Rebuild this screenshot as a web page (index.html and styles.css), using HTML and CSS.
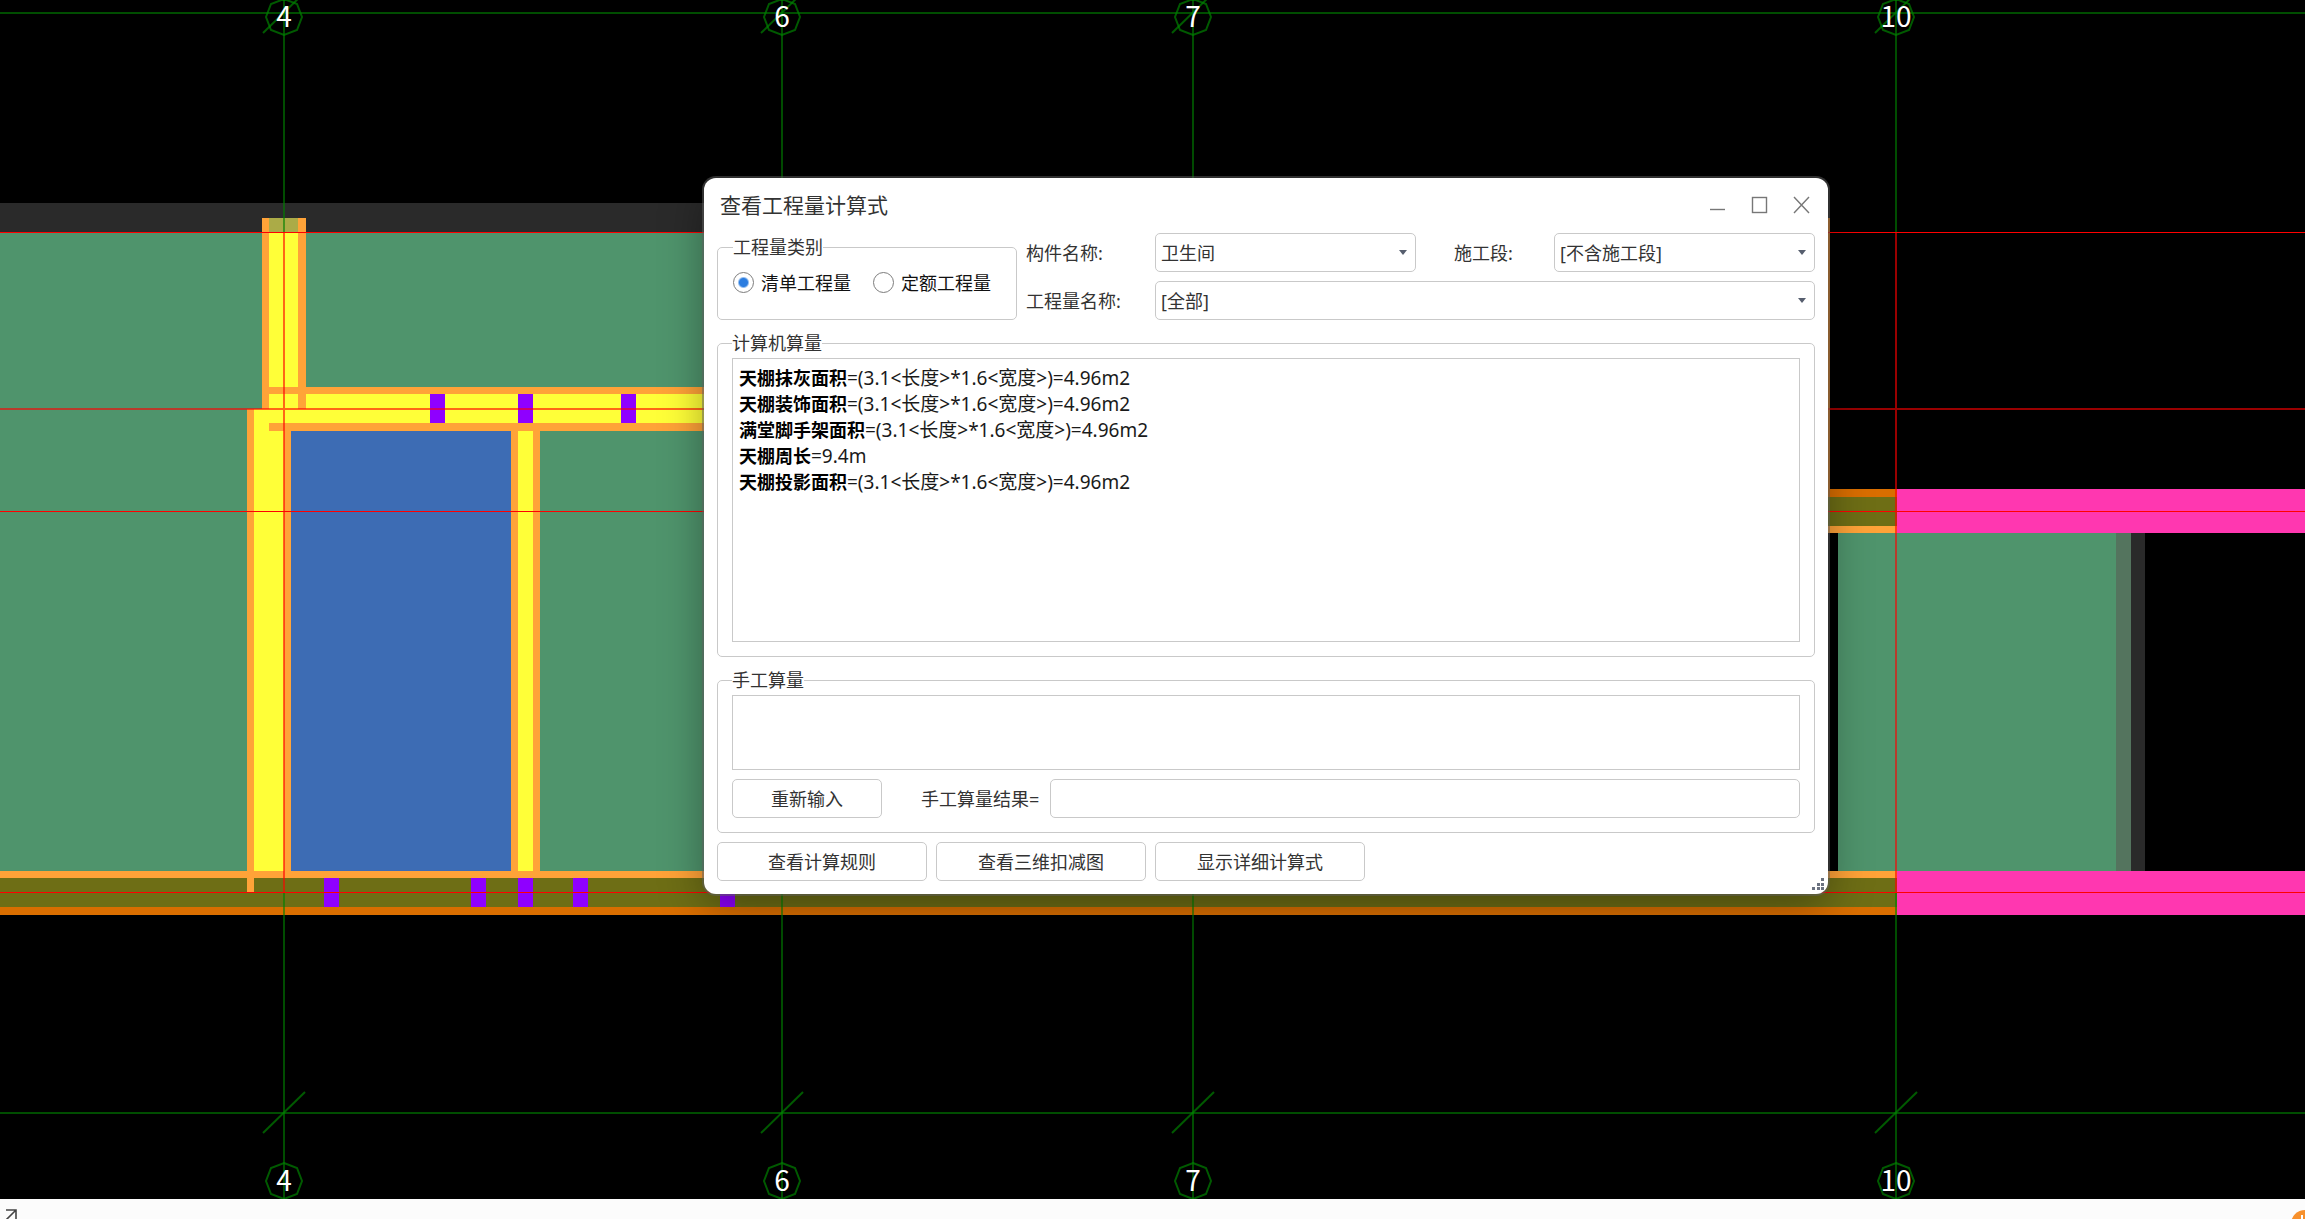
FILE: index.html
```html
<!DOCTYPE html>
<html lang="zh-CN">
<head>
<meta charset="utf-8">
<title>查看工程量计算式</title>
<link rel="stylesheet" href="styles.css">
</head>
<body>
<main class="workspace">
  <svg class="plan" viewBox="0 0 2305 1199" preserveAspectRatio="xMinYMin slice" aria-label="平面图">
    <!-- slab outline and rooms -->
    <rect class="outline" x="0" y="203" width="1100" height="30"/>
    <rect class="room" x="0" y="233" width="1100" height="638"/>
    <rect class="room" x="1838" y="533" width="278" height="338"/>
    <rect class="room-edge" x="2116" y="533" width="15" height="338"/>
    <rect class="outline" x="2131" y="533" width="14" height="338"/>
    <!-- upper wall on axis 4 -->
    <rect class="wall" x="262" y="218" width="44" height="191"/>
    <rect class="core" x="269" y="218" width="29" height="191"/>
    <rect class="core-cap" x="269" y="218" width="29" height="14"/>
    <!-- horizontal wall -->
    <rect class="core" x="306" y="387" width="800" height="44"/>
    <rect class="wall" x="269" y="387" width="800" height="7"/>
    <!-- lower wall on axis 4 -->
    <rect class="core" x="247" y="409" width="60" height="14"/>
    <rect class="core" x="254" y="409" width="30" height="462"/>
    <rect class="wall" x="284" y="423" width="7" height="448"/>
    <rect class="wall" x="269" y="423" width="800" height="8"/>
    <rect class="bathroom" x="291" y="431" width="220" height="440"/>
    <rect class="wall" x="511" y="431" width="29" height="440"/>
    <rect class="core" x="518" y="431" width="15" height="440"/>
    <!-- bottom beam -->
    <rect class="beam" x="0" y="878" width="1897" height="29"/>
    <rect class="wall" x="0" y="871" width="1897" height="7"/>
    <rect class="beam-edge" x="0" y="907" width="1897" height="8"/>
    <rect class="wall" x="247" y="409" width="7" height="484"/>
    <!-- beam right of the dialog -->
    <rect class="beam-edge" x="1820" y="218" width="10" height="272"/>
    <rect class="beam" x="1800" y="497" width="97" height="29"/>
    <rect class="beam-edge" x="1800" y="489" width="97" height="8"/>
    <rect class="wall" x="1800" y="526" width="97" height="7"/>
    <g class="column">
      <rect x="430" y="394" width="15" height="29"/><rect x="518" y="394" width="15" height="29"/>
      <rect x="621" y="394" width="15" height="29"/><rect x="324" y="878" width="15" height="29"/>
      <rect x="471" y="878" width="15" height="29"/><rect x="518" y="878" width="15" height="29"/>
      <rect x="573" y="878" width="15" height="29"/><rect x="720" y="878" width="15" height="29"/>
    </g>
    <rect class="strip" x="1897" y="489" width="408" height="44"/>
    <rect class="strip" x="1897" y="871" width="408" height="44"/>
    <!-- axis lines -->
    <g class="axis">
      <path d="M0 13H2305M0 1113H2305"/>
      <path d="M284 0V232M284 893V1199M782 0V1199M1193 0V1199M1896 0V232M1896 893V1199"/>
    </g>
    <g class="grid">
      <path class="grid-solid" d="M0 232.500H2305M0 511.500H2305M0 892.500H2305"/>
      <path class="grid-soft" d="M0 409H2305M284 233V892M1896 233V892"/>
    </g>
    <defs>
      <g id="mark"><path d="M0-18L13-13L18 0L13 13L0 18L-13 13L-18 0L-13-13Z"/></g>
      <path id="tick" d="M-21 20L21-21"/>
    </defs>
    <g class="marks">
      <use href="#tick" x="284" y="13"/><use href="#tick" x="782" y="13"/><use href="#tick" x="1193" y="13"/><use href="#tick" x="1896" y="13"/>
      <use href="#tick" x="284" y="1113"/><use href="#tick" x="782" y="1113"/><use href="#tick" x="1193" y="1113"/><use href="#tick" x="1896" y="1113"/>
      <use href="#mark" x="284" y="17"/><use href="#mark" x="782" y="17"/><use href="#mark" x="1193" y="17"/><use href="#mark" x="1896" y="17"/>
      <use href="#mark" x="284" y="1181"/><use href="#mark" x="782" y="1181"/><use href="#mark" x="1193" y="1181"/><use href="#mark" x="1896" y="1181"/>
    </g>
    <g class="axis-name">
      <text x="284" y="27">4</text><text x="782" y="27">6</text><text x="1193" y="27">7</text><text x="1896" y="27">10</text>
      <text x="284" y="1191">4</text><text x="782" y="1191">6</text><text x="1193" y="1191">7</text><text x="1896" y="1191">10</text>
    </g>
  </svg>

  <section class="dialog" role="dialog" aria-labelledby="dialog-title">
    <header class="titlebar">
      <h1 id="dialog-title">查看工程量计算式</h1>
      <button class="win-btn" type="button" aria-label="最小化"><svg width="18" height="18"><path d="M1 13.500H16"/></svg></button>
      <button class="win-btn" type="button" aria-label="最大化"><svg width="18" height="18"><rect x="1.500" y="1.500" width="14" height="15"/></svg></button>
      <button class="win-btn" type="button" aria-label="关闭"><svg width="18" height="18"><path d="M1 1L16 17M16 1L1 17"/></svg></button>
    </header>

    <form class="form">
      <div class="filters">
        <fieldset class="group kinds">
          <legend>工程量类别</legend>
          <div class="radios">
            <label class="radio"><input type="radio" name="kind" checked>清单工程量</label>
            <label class="radio"><input type="radio" name="kind">定额工程量</label>
          </div>
        </fieldset>
        <label for="part">构件名称:</label>
        <span class="combo"><select id="part"><option>卫生间</option></select></span>
        <label class="stage" for="stage">施工段:</label>
        <span class="combo"><select id="stage"><option>[不含施工段]</option></select></span>
        <label for="quantity">工程量名称:</label>
        <span class="combo wide"><select id="quantity"><option>[全部]</option></select></span>
      </div>

      <fieldset class="group">
        <legend>计算机算量</legend>
        <div class="results">
          <p><b>天棚抹灰面积</b><span>=(3.1&lt;长度&gt;*1.6&lt;宽度&gt;)=4.96m2</span></p>
          <p><b>天棚装饰面积</b><span>=(3.1&lt;长度&gt;*1.6&lt;宽度&gt;)=4.96m2</span></p>
          <p><b>满堂脚手架面积</b><span>=(3.1&lt;长度&gt;*1.6&lt;宽度&gt;)=4.96m2</span></p>
          <p><b>天棚周长</b><span>=9.4m</span></p>
          <p><b>天棚投影面积</b><span>=(3.1&lt;长度&gt;*1.6&lt;宽度&gt;)=4.96m2</span></p>
        </div>
      </fieldset>

      <fieldset class="group">
        <legend>手工算量</legend>
        <textarea class="manual" aria-label="手工算量"></textarea>
        <div class="manual-row">
          <button class="btn reset" type="button">重新输入</button>
          <label for="manual-result">手工算量结果=</label>
          <input class="field" id="manual-result" type="text">
        </div>
      </fieldset>

      <div class="actions">
        <button class="btn" type="button">查看计算规则</button>
        <button class="btn" type="button">查看三维扣减图</button>
        <button class="btn" type="button">显示详细计算式</button>
      </div>
    </form>
    <svg class="grip" width="12" height="12" aria-hidden="true"><path d="M9 0h3v3h-3zM9 5h3v3h-3zM9 9h3v3h-3zM5 5h3v3h-3zM5 9h3v3h-3zM0 9h3v3h-3z"/></svg>
  </section>
</main>

<footer class="statusbar">
  <svg class="expand" width="14" height="14" aria-hidden="true"><path d="M1 1H11V11M11 1L1 11"/></svg>
  <svg class="badge" width="14" height="9" aria-hidden="true"><circle cx="14" cy="14" r="14"/><path d="M11 5V9"/></svg>
</footer>
</body>
</html>
```
FILE: styles.css
```css
* { box-sizing: border-box; }

body {
  margin: 0;
  height: 100vh;
  display: flex;
  flex-direction: column;
  overflow: hidden;
  background: #000;
  color: #333;
  font: 18px/18px "Noto Sans", "Noto Sans CJK SC", sans-serif;
}

.workspace { position: relative; flex: 1; min-height: 0; overflow: hidden; }
.plan { display: block; width: 100%; height: 100%; }

.outline { fill: #2a2a2a; }
.room { fill: #4f946c; }
.room-edge { fill: #54745e; }
.bathroom { fill: #3d6cb4; }
.wall { fill: #ffa338; }
.core { fill: #ffff38; }
.core-cap { fill: #abab47; }
.beam { fill: #6e6e15; }
.beam-edge { fill: #d96e00; }
.column { fill: #8f00ff; }
.strip { fill: #ff37b0; }
.axis { fill: none; stroke: #008000; stroke-opacity: .6; stroke-width: 2; }
.grid { fill: none; stroke: #ff0000; }
.grid-solid { stroke-width: 1; }
.grid-soft { stroke-width: 2; stroke-opacity: .6; }
.marks { fill: none; stroke: #008000; stroke-width: 2; stroke-opacity: .7; }
.axis-name { fill: #fff; font-family: "Noto Sans CJK SC", sans-serif; font-size: 28px; text-anchor: middle; }

.dialog {
  position: absolute;
  top: 178px;
  left: 704px;
  right: 477px;
  padding: 0 13px 13px;
  border-radius: 12px;
  background: #fff;
  box-shadow: 0 0 0 2px rgba(96, 96, 96, .5), 0 12px 44px rgba(0, 0, 0, .36);
}

.titlebar { display: flex; align-items: center; height: 55px; margin-right: -8px; padding-bottom: 2px; }
.titlebar h1 { flex: 1; margin: 0 0 0 3px; font-size: 21px; line-height: 24px; font-weight: 400; }
.win-btn { display: grid; place-items: center; width: 42px; height: 42px; padding: 0; border: 0; background: none; }
.win-btn svg { fill: none; stroke: #777; stroke-width: 1.4; }

.form { display: flex; flex-direction: column; }

.filters {
  display: grid;
  grid-template-columns: 300px 120px 1fr 120px 1fr;
  grid-template-rows: 39px 39px;
  column-gap: 9px;
  row-gap: 9px;
  align-items: center;
  margin-bottom: 14px;
}
.stage { padding-left: 29px; }

.group {
  min-width: 0;
  margin: 0 0 14px;
  padding: 6px 14px 14px;
  border: 1px solid #c9c9c9;
  border-radius: 5px;
}
.group legend { padding: 0; line-height: 18px; }
.group:nth-of-type(2) { margin-bottom: 9px; }
.kinds { grid-row: 1 / 3; align-self: stretch; margin: 5px 0 0; padding: 16px 15px 0; }

.radios { display: flex; gap: 22px; }
.radio { display: flex; align-items: center; gap: 7px; color: #111; white-space: nowrap; }
.radio input {
  appearance: none;
  width: 21px;
  height: 21px;
  margin: 0;
  border: 1px solid #7c7c7c;
  border-radius: 50%;
  background: #fff;
}
.radio input:checked { background: radial-gradient(circle, #2b7de0 4px, #fff 6px); }

.combo { display: grid; align-items: center; }
.combo.wide { grid-column: 3 / 6; }
.combo select { grid-area: 1 / 1; appearance: none; width: 100%; padding: 0 24px 0 5px; line-height: 28px; }
.combo::after {
  content: "";
  grid-area: 1 / 1;
  justify-self: end;
  margin-right: 9px;
  border: 4px solid transparent;
  border-top: 5px solid #565e6e;
  border-bottom: 0;
  pointer-events: none;
}

select, .field, .btn {
  height: 39px;
  border: 1px solid #c9c9c9;
  border-radius: 5px;
  background: #fff;
  color: #333;
  font: inherit;
}
.btn { padding: 0; }

.results {
  height: 284px;
  padding: 6px;
  border: 1px solid #c9c9c9;
  color: #1a1a1a;
  line-height: 26px;
  overflow: auto;
}
.results p { height: 26px; margin: 0; }
.results b { color: #000; }
.results span { font-size: 19px; }

.manual {
  display: block;
  width: 100%;
  height: 75px;
  margin-bottom: 9px;
  padding: 6px;
  border: 1px solid #c9c9c9;
  background: #fff;
  font: inherit;
  resize: none;
}
.manual-row { display: flex; align-items: center; gap: 9px; }
.manual-row label { width: 120px; white-space: nowrap; }
.manual-row .field { flex: 1; min-width: 0; }
.reset { width: 150px; margin-right: 30px; }

.actions { display: flex; gap: 9px; }
.actions .btn { width: 210px; }

.grip { position: absolute; right: 4px; bottom: 4px; fill: #6b7280; }

.statusbar {
  display: flex;
  flex: none;
  align-items: flex-start;
  justify-content: space-between;
  height: 20px;
  padding: 10px 0 0 5px;
  overflow: hidden;
  background: #fcfcfc;
}
.expand { fill: none; stroke: #444; stroke-width: 1.6; }
.badge { margin-top: 1px; fill: #f7902c; stroke: none; }
.badge path { stroke: #fff; stroke-width: 2; }
```
